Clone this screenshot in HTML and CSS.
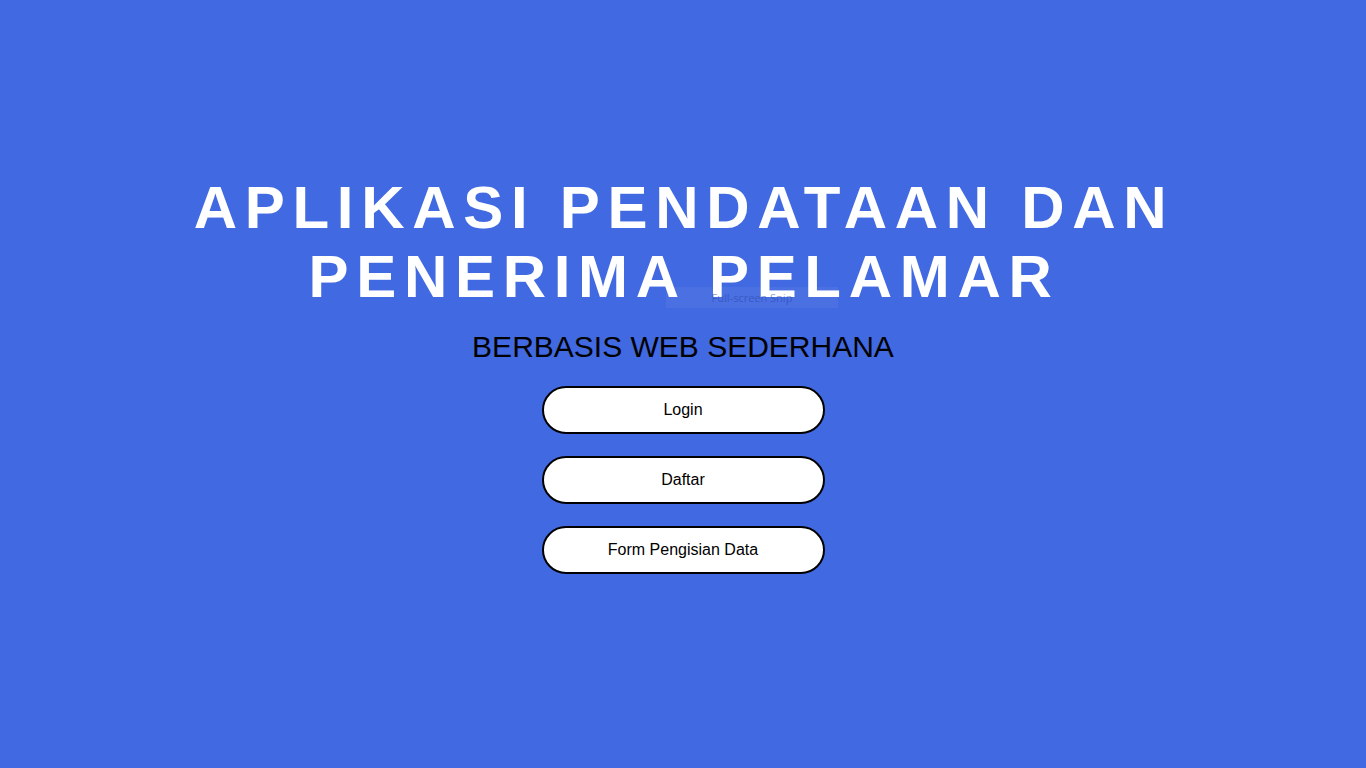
FILE: index.html
```html
<!DOCTYPE html>
<html lang="id">
<head>
<meta charset="utf-8">
<title>Aplikasi Pendataan dan Penerima Pelamar</title>
<link rel="stylesheet" href="styles.css">
</head>
<body>
<main class="hero">
  <h1 class="title">APLIKASI PENDATAAN DAN<br>PENERIMA PELAMAR</h1>
  <p class="subtitle">BERBASIS WEB SEDERHANA</p>
  <nav class="actions">
    <a class="btn" href="#">Login</a>
    <a class="btn" href="#">Daftar</a>
    <a class="btn" href="#">Form Pengisian Data</a>
  </nav>
</main>
<div class="snip">Full-screen Snip</div>
</body>
</html>
```
FILE: styles.css
```css
html, body {
  margin: 0;
  padding: 0;
}
body {
  background: #4169e1;
  min-height: 100vh;
  font-family: "Liberation Sans", Arial, sans-serif;
  position: relative;
}
.hero {
  display: flex;
  flex-direction: column;
  align-items: center;
  padding-top: 173px;
}
.title {
  margin: 0;
  color: #ffffff;
  font-size: 60px;
  font-weight: bold;
  letter-spacing: 7.7px;
  line-height: 69px;
  text-align: center;
  padding-left: 2px;
}
.subtitle {
  margin: 19px 0 0;
  font-size: 30px;
  line-height: 34px;
  color: #000;
}
.actions {
  display: flex;
  flex-direction: column;
  gap: 22px;
  margin-top: 22px;
}
.btn {
  box-sizing: border-box;
  width: 283px;
  height: 48px;
  border: 2px solid #000;
  border-radius: 24px;
  background: #fff;
  color: #000;
  text-decoration: none;
  font-size: 16px;
  display: flex;
  align-items: center;
  justify-content: center;
}
.snip {
  position: absolute;
  left: 666px;
  top: 287px;
  width: 172px;
  height: 21px;
  background: rgba(255, 255, 255, 0.05);
  color: rgba(40, 70, 170, 0.55);
  font-family: "Open Sans", sans-serif;
  font-size: 11px;
  line-height: 21px;
  text-align: center;
}
```
